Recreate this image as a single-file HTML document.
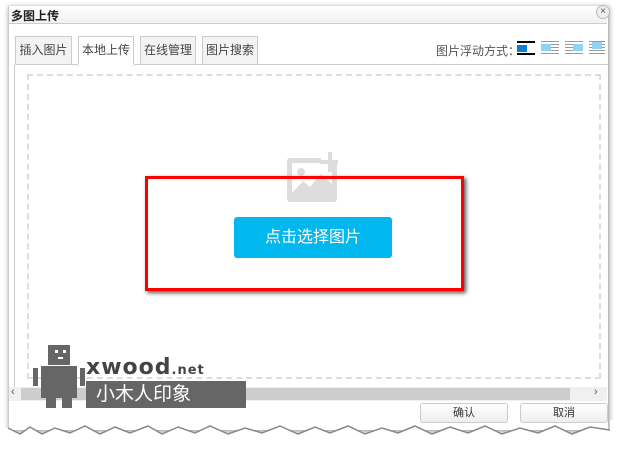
<!DOCTYPE html>
<html><head><meta charset="utf-8"><style>
*{margin:0;padding:0;box-sizing:border-box}
body{width:629px;height:451px;background:#fff;position:relative;overflow:hidden;font-family:"Liberation Sans","Noto Sans CJK SC",sans-serif;font-size:12px;color:#333}
.a{position:absolute}
.tab{position:absolute;top:36px;height:29px;border:1px solid #ccc;border-bottom:none;background:#f3f3f3;line-height:26px;text-align:center;font-size:12px;color:#444}
</style></head><body>
<div class="a" style="left:8px;top:6px;width:600px;height:424px;background:#fff;box-shadow:1px 1px 5px #888;border-left:1px solid #ccc"></div>
<div class="a" style="left:9px;top:6px;width:598px;height:18px;background:linear-gradient(#fff,#f2f2f2);border-bottom:1px solid #ccc"></div>
<div class="a" style="left:11px;top:7px;font-size:12px;font-weight:bold;color:#222">多图上传</div>
<div class="a" style="left:596px;top:5px;width:14px;height:14px;border-radius:7px;background:#eee;border:1px solid #bbb;font-size:10px;line-height:12px;text-align:center;color:#555">×</div>
<div class="tab" style="left:15px;width:57px">插入图片</div>
<div class="tab" style="left:78px;width:56px;background:#fff;height:30px">本地上传</div>
<div class="tab" style="left:140px;width:56px">在线管理</div>
<div class="tab" style="left:202px;width:56px">图片搜索</div>
<div class="a" style="left:15px;top:64px;width:593px;height:1px;background:#ccc"></div>
<div class="a" style="left:78px;top:64px;width:56px;height:1px;background:#fff"></div>
<div class="a" style="left:436px;top:42px;font-size:12px;color:#555">图片浮动方式：</div>
<div class="a" style="left:517px;top:41px;width:18px;height:14px;border-top:2px solid #000;border-bottom:2px solid #000"><div style="position:absolute;left:0;top:2px;width:10px;height:7px;background:#0a80d0"></div></div>
<div class="a" style="left:541px;top:41px;width:18px;height:14px;background:repeating-linear-gradient(#999 0 1px,#fff 1px 3px)"><div style="position:absolute;left:0;top:3px;width:10px;height:7px;background:#8fd3f5"></div></div>
<div class="a" style="left:565px;top:41px;width:18px;height:14px;background:repeating-linear-gradient(#999 0 1px,#fff 1px 3px)"><div style="position:absolute;left:8px;top:3px;width:10px;height:7px;background:#8fd3f5"></div></div>
<div class="a" style="left:589px;top:41px;width:16px;height:14px;background:repeating-linear-gradient(#999 0 1px,#fff 1px 3px)"><div style="position:absolute;left:3px;top:1px;width:10px;height:7px;background:#8fd3f5"></div></div>
<div class="a" style="left:14px;top:65px;width:1px;height:322px;background:#ccc"></div>
<div class="a" style="left:27px;top:74px;width:574px;height:305px;border:2px dashed #ddd"></div>
<svg class="a" style="left:285px;top:150px" width="60" height="54" viewBox="0 0 60 54">
<rect x="2" y="8" width="50" height="44" rx="3" fill="#ddd"/>
<rect x="7" y="13" width="40" height="30" fill="#fff"/>
<rect x="36" y="0" width="20" height="14" fill="#fff"/>
<rect x="43" y="2" width="4" height="20" fill="#ddd"/><rect x="35" y="10" width="18" height="4" fill="#ddd"/>
<circle cx="16" cy="22" r="4" fill="#ddd"/>
<path d="M7 43 L18 31 L25 37 L36 24 L47 34 L47 43Z" fill="#ddd"/>
</svg>
<div class="a" style="left:145px;top:176px;width:319px;height:115px;border:3px solid #f00;box-shadow:2px 2px 4px #555"></div>
<div class="a" style="left:234px;top:217px;width:158px;height:41px;background:#00b7ee;border-radius:3px;color:#fff;font-size:16px;line-height:41px;text-align:center">点击选择图片</div>
<div class="a" style="left:9px;top:387px;width:598px;height:14px;background:#f0f0f0"></div>
<div class="a" style="left:21px;top:388px;width:549px;height:12px;background:#cdcdcd"></div>
<div class="a" style="left:11px;top:386px;font-size:11px;color:#555">‹</div>
<div class="a" style="left:594px;top:386px;font-size:11px;color:#555">›</div>
<div class="a" style="left:420px;top:403px;width:88px;height:20px;border:1px solid #ccc;border-radius:3px;background:linear-gradient(#fff,#eee);text-align:center;line-height:18px;font-size:11px">确认</div>
<div class="a" style="left:520px;top:403px;width:88px;height:20px;border:1px solid #ccc;border-radius:3px;background:linear-gradient(#fff,#eee);text-align:center;line-height:18px;font-size:11px">取消</div>
<div class="a" style="left:48px;top:345px;width:22px;height:20px;background:#666"></div>
<div class="a" style="left:55px;top:350px;width:3px;height:3px;background:#fff"></div><div class="a" style="left:63px;top:350px;width:3px;height:3px;background:#fff"></div><div class="a" style="left:58px;top:357px;width:5px;height:2px;background:#fff"></div>
<div class="a" style="left:41px;top:366px;width:36px;height:32px;background:#666"></div>
<div class="a" style="left:33px;top:368px;width:5px;height:18px;background:#666"></div>
<div class="a" style="left:80px;top:368px;width:5px;height:18px;background:#666"></div>
<div class="a" style="left:46px;top:397px;width:10px;height:11px;background:#666"></div>
<div class="a" style="left:62px;top:397px;width:10px;height:11px;background:#666"></div>
<div class="a" style="left:86px;top:356px;font-size:22px;font-weight:bold;color:#444;letter-spacing:1px;font-family:'DejaVu Sans',sans-serif;line-height:24px">xwood<span style="font-size:13px">.net</span></div>
<div class="a" style="left:86px;top:381px;width:160px;height:27px;background:#666;color:#fff;font-size:19px;line-height:27px;padding-left:10px">小木人印象</div>
<svg class="a" style="left:0;top:420px" width="629" height="31"><path d="M8 8 L20 14 L30 7 L42 14 L55 8 L70 13 L85 6 L100 14 L115 7 L130 13 L148 6 L162 14 L178 7 L195 13 L210 6 L228 14 L245 8 L262 13 L280 6 L298 14 L315 7 L330 13 L348 6 L365 14 L382 8 L398 13 L415 6 L432 14 L450 7 L468 13 L485 6 L502 14 L520 8 L538 13 L555 6 L572 14 L590 7 L610 10 L610 0 L629 0 L629 31 L0 31 L0 8Z" fill="#fff"/><path d="M8 8 L20 14 L30 7 L42 14 L55 8 L70 13 L85 6 L100 14 L115 7 L130 13 L148 6 L162 14 L178 7 L195 13 L210 6 L228 14 L245 8 L262 13 L280 6 L298 14 L315 7 L330 13 L348 6 L365 14 L382 8 L398 13 L415 6 L432 14 L450 7 L468 13 L485 6 L502 14 L520 8 L538 13 L555 6 L572 14 L590 7 L610 10" fill="none" stroke="#888" stroke-width="1.5"/></svg>
</body></html>
